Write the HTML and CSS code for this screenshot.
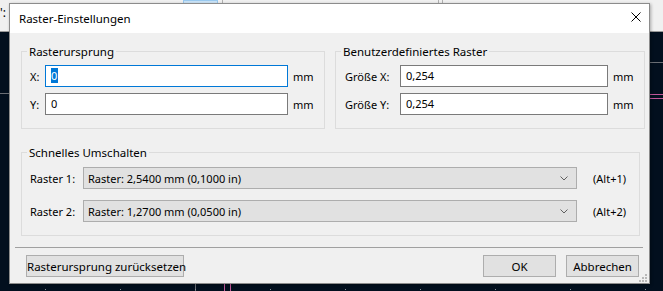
FILE: index.html
```html
<!DOCTYPE html>
<html lang="de">
<head>
  <meta charset="UTF-8">
  <title>Raster-Einstellungen</title>
  <link rel="stylesheet" href="styles.css">
</head>
<body>

  <!-- editor behind the dialog -->
  <div class="toolbar">
    <span class="tb-label">': N</span>
    <span class="tb-btn"></span>
    <span class="tb-sep sep-a"></span>
    <span class="tb-sep sep-b"></span>
    <span class="tb-sep sep-c"></span>
  </div>
  <div class="board">
    <div class="trace trace-h gray-left"></div>
    <div class="trace trace-h gray-right"></div>
    <div class="trace trace-h pink-1"></div>
    <div class="trace trace-h pink-2"></div>
    <div class="trace trace-v gray-v"></div>
    <div class="trace trace-v pink-v1"></div>
    <div class="trace trace-v pink-v2"></div>
    <div class="grid-dots"></div>
  </div>

  <!-- dialog -->
  <div class="dialog">
    <div class="titlebar">
      <span class="title">Raster-Einstellungen</span>
      <svg class="close" width="10" height="10" viewBox="0 0 10 10">
        <path d="M0.5 0.5 L9.5 9.5 M9.5 0.5 L0.5 9.5" stroke="#000" stroke-width="1" fill="none"/>
      </svg>
    </div>

    <div class="content">
      <div class="top-groups">
        <fieldset class="group group-origin">
          <legend>Rasterursprung</legend>
          <div class="row">
            <label class="lbl lbl-xy">X:</label>
            <div class="edit edit-origin focused"><span class="selected">0</span></div>
            <span class="unit">mm</span>
          </div>
          <div class="row">
            <label class="lbl lbl-xy">Y:</label>
            <div class="edit edit-origin">0</div>
            <span class="unit">mm</span>
          </div>
        </fieldset>

        <fieldset class="group group-custom">
          <legend>Benutzerdefiniertes Raster</legend>
          <div class="row">
            <label class="lbl lbl-size">Größe X:</label>
            <div class="edit edit-size">0,254</div>
            <span class="unit">mm</span>
          </div>
          <div class="row">
            <label class="lbl lbl-size">Größe Y:</label>
            <div class="edit edit-size">0,254</div>
            <span class="unit">mm</span>
          </div>
        </fieldset>
      </div>

      <fieldset class="group group-quick">
        <legend>Schnelles Umschalten</legend>
        <div class="row row-combo">
          <label class="lbl lbl-grid">Raster 1:</label>
          <div class="combo">
            <span>Raster: 2,5400 mm (0,1000 in)</span>
            <svg class="chevron" width="8" height="5" viewBox="0 0 8 5"><path d="M0.5 0.5 L4 4 L7.5 0.5" stroke="#606060" fill="none"/></svg>
          </div>
          <span class="hotkey">(Alt+1)</span>
        </div>
        <div class="row row-combo">
          <label class="lbl lbl-grid">Raster 2:</label>
          <div class="combo">
            <span>Raster: 1,2700 mm (0,0500 in)</span>
            <svg class="chevron" width="8" height="5" viewBox="0 0 8 5"><path d="M0.5 0.5 L4 4 L7.5 0.5" stroke="#606060" fill="none"/></svg>
          </div>
          <span class="hotkey">(Alt+2)</span>
        </div>
      </fieldset>

      <div class="separator"></div>

      <div class="footer">
        <button class="btn btn-reset">Rasterursprung zurücksetzen</button>
        <div class="spacer"></div>
        <button class="btn btn-ok">OK</button>
        <button class="btn btn-cancel">Abbrechen</button>
      </div>
    </div>

    <svg class="grip" width="8" height="8" viewBox="0 0 8 8">
      <rect x="6" y="0" width="2" height="2" fill="#b8b8b8"/>
      <rect x="3" y="3" width="2" height="2" fill="#b8b8b8"/>
      <rect x="6" y="3" width="2" height="2" fill="#b8b8b8"/>
      <rect x="0" y="6" width="2" height="2" fill="#b8b8b8"/>
      <rect x="3" y="6" width="2" height="2" fill="#b8b8b8"/>
      <rect x="6" y="6" width="2" height="2" fill="#b8b8b8"/>
    </svg>
  </div>

</body>
</html>
```

FILE: styles.css
```css
/* Page / editor background */
body {
  margin: 0;
  width: 663px;
  height: 291px;
  overflow: hidden;
  background-color: #020f1e;
  font-family: 'Noto Sans', 'DejaVu Sans', sans-serif;
  font-size: 11px;
  color: #000;
  position: relative;
}

.toolbar {
  height: 31px;
  background-color: #f0f0f0;
  border-bottom: 1px solid #9a9a9a;
  position: relative;
}

.tb-label {
  position: absolute;
  left: 0;
  top: 5px;
  line-height: 16px;
  font-size: 12px;
}

.tb-btn {
  position: absolute;
  left: 183px;
  top: 0;
  width: 33px;
  height: 26px;
  background-color: #cce4f7;
  border: 1px solid #99c9ef;
}

.tb-sep {
  position: absolute;
  top: 0;
  width: 1px;
  height: 26px;
  background-color: #b0b0b0;
}

.sep-a { left: 222px; }
.sep-b { left: 438px; }
.sep-c { left: 442px; }

/* Board traces */
.board {
  position: relative;
  height: 259px;
}

.trace {
  position: absolute;
}

.trace-h {
  height: 1px;
}

.trace-v {
  width: 1px;
  top: 0;
  bottom: 0;
}

.gray-left { top: 61px; left: 0; width: 20px; background-color: #6a6e75; }
.gray-right { top: 30px; left: 640px; right: 0; background-color: #6a6e75; }
.pink-1 { top: 62px; left: 640px; right: 0; background-color: #c0579a; }
.pink-2 { top: 66px; left: 640px; right: 0; background-color: #c0579a; }
.gray-v { left: 195px; background-color: #6a6e75; }
.pink-v1 { left: 224px; background-color: #c0579a; }
.pink-v2 { left: 230px; background-color: #c0579a; }

.grid-dots {
  position: absolute;
  left: 45px;
  right: 0;
  top: 257px;
  height: 1px;
  background-image: linear-gradient(to right, #8a8f96 1px, transparent 1px);
  background-size: 75px 1px;
}

/* Dialog */
.dialog {
  position: absolute;
  left: 9px;
  top: 3px;
  width: 641px;
  height: 281px;
  box-sizing: border-box;
  border: 1px solid #8c8c8c;
  background-color: #f0f0f0;
  box-shadow: 1px 1px 3px rgba(0, 0, 0, 0.3);
  display: flex;
  flex-direction: column;
}

.titlebar {
  height: 29px;
  background-color: #fff;
  display: flex;
  align-items: center;
  padding: 0 8px 0 9px;
}

.title {
  flex: 1;
  font-size: 11.5px;
  line-height: 16px;
  margin-top: 1px;
}

.close {
  display: block;
  margin-top: -3px;
}

.content {
  padding: 11px 0 0 11px;
  display: flex;
  flex-direction: column;
}

/* Group boxes */
.top-groups {
  display: flex;
  gap: 10px;
}

.group {
  margin: 0;
  border: 1px solid #dcdcdc;
  padding: 6px 0 13px 0;
  box-sizing: border-box;
}

.group legend {
  margin-left: 5px;
  padding: 0 2px;
  line-height: 15px;
  font-size: 11.5px;
}

.group-origin { width: 304px; }
.group-custom { width: 310px; }

.group-quick {
  width: 619px;
  margin-top: 16px;
  padding-top: 7px;
}

.row {
  display: flex;
  align-items: center;
  height: 22px;
  padding-left: 8px;
}

.group-custom .row {
  padding-left: 9px;
}

.row + .row {
  margin-top: 6px;
}

.row-combo + .row-combo {
  margin-top: 11px;
}

.lbl-xy { width: 15px; }
.lbl-size { width: 55px; }
.lbl-grid { width: 53px; }

.edit {
  box-sizing: border-box;
  height: 22px;
  background-color: #fff;
  border: 1px solid #7a7a7a;
  padding-left: 5px;
  line-height: 20px;
}

.edit.focused {
  border-color: #0078d7;
}

.selected {
  background-color: #0078d7;
  color: #fff;
  display: inline-block;
  line-height: 15px;
  padding: 0 1px 0 0;
}

.edit-origin { width: 243px; }
.edit-size { width: 208px; }

.unit {
  margin-left: 5px;
}

.combo {
  box-sizing: border-box;
  width: 494px;
  height: 22px;
  background-color: #e1e1e1;
  border: 1px solid #adadad;
  padding: 0 8px 0 4px;
  display: flex;
  align-items: center;
  justify-content: space-between;
}

.hotkey {
  margin-left: 16px;
}

/* Footer */
.separator {
  height: 1px;
  background-color: #a0a0a0;
  margin: 11px 6px 0 -6px;
}

.footer {
  display: flex;
  gap: 10px;
  margin-top: 7px;
  padding: 0 10px 0 5px;
}

.spacer {
  flex: 1;
}

.btn {
  font-family: inherit;
  font-size: 11.5px;
  color: #000;
  height: 22px;
  padding: 0;
  background-color: #e1e1e1;
  border: 1px solid #adadad;
  border-radius: 0;
  white-space: nowrap;
}

.btn-reset { width: 158px; }
.btn-ok { width: 73px; }
.btn-cancel { width: 73px; }

.grip {
  position: absolute;
  right: 2px;
  bottom: 1px;
}
```
